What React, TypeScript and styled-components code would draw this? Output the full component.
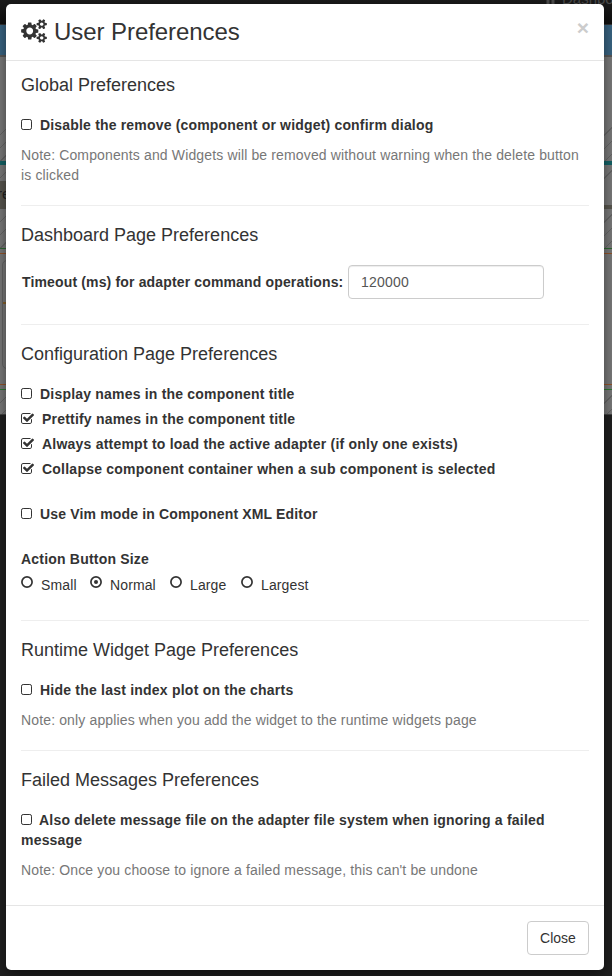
import React from "react";
import styled, { createGlobalStyle } from "styled-components";

const GlobalStyle = createGlobalStyle`
  * { box-sizing: border-box; }
  html, body { margin: 0; height: 100%; background: #1c1c1c; overflow: hidden; }
  body { font: 14px/20px "Liberation Sans", Arial, sans-serif; color: #333; }
`;

const Screen = styled.div`
  position: relative;
  width: 612px;
  height: 976px;
  overflow: hidden;
`;

/* dimmed dashboard page behind the dialog */
const Page = styled.div`
  height: 100%;
  display: flex;
  flex-direction: column;
  background: #202020;
`;
const Nav = styled.div`
  height: 25px;
  flex: none;
  display: flex;
  align-items: flex-start;
  gap: 6px;
  padding-left: 545px;
  background: linear-gradient(#1b1b1b, #101010);
  border-bottom: 1px solid #333;
  color: #4c4c4c;
  white-space: nowrap;
  overflow: hidden;
`;
const NavIcon = styled.svg`
  width: 11px;
  height: 11px;
  flex: none;
  margin-top: -7px;
`;
const NavText = styled.span`
  margin-top: -11px;
  font-size: 15px;
`;
const Band = styled.div<{ $h: number; $color: string }>`
  flex: none;
  height: ${(p) => p.$h}px;
  background: ${(p) => p.$color};
`;
const Hatch = styled.div<{ $h: number }>`
  flex: none;
  height: ${(p) => p.$h}px;
  background: repeating-linear-gradient(135deg, #7c7c7c 0 8.5px, #686868 8.5px 9.5px);
`;
const Tab = styled.div`
  flex: none;
  height: 28px;
  display: flex;
  justify-content: space-between;
  align-items: flex-end;
`;
const TabLabel = styled.div`
  width: 40px;
  height: 28px;
  background: #5a5850;
  color: #222;
  font-size: 15px;
  line-height: 25px;
  text-indent: -3px;
`;
const TabRule = styled.div`
  flex: 1;
  height: 28px;
  background: linear-gradient(#7c7c7c 0 24px, #5a5850 24px);
`;
const Panel = styled.div`
  flex: none;
  height: 130px;
  padding: 6px 2px 15px;
  background: #7c7c7c;
`;
const PanelCard = styled.div`
  width: 560px;
  height: 109px;
  border: 1px solid #666;
  border-radius: 5px;
  padding-top: 41px;
`;
const PanelRule = styled.div`
  height: 2px;
  background: #8a632c;
`;

const Dialog = styled.div`
  position: absolute;
  left: 6px;
  top: 4px;
  width: 598px;
  height: 966px;
  display: flex;
  flex-direction: column;
  background: #fff;
  border-radius: 5px;
  box-shadow: 0 5px 15px rgba(0, 0, 0, 0.5);
`;
const Header = styled.header`
  flex: none;
  height: 57px;
  padding: 0 15px;
  display: flex;
  align-items: flex-start;
  border-bottom: 1px solid #e5e5e5;
`;
const Title = styled.h3`
  margin: 11px 0 0 7px;
  flex: 1;
  font-size: 24px;
  line-height: 34px;
  font-weight: 400;
  letter-spacing: -0.06px;
`;
const CogsIcon = styled.svg`
  width: 26px;
  height: 24px;
  margin-top: 15px;
`;
const Dismiss = styled.button`
  margin: 13px 0 0;
  padding: 0;
  border: 0;
  background: none;
  color: #ccc;
  font: bold 21px/21px "Liberation Sans", Arial, sans-serif;
`;
const Body = styled.main`
  flex: 1;
  padding: 14px 15px 0;
`;
const Section = styled.section<{ $h: number }>`
  height: ${(p) => p.$h}px;
  & + & {
    border-top: 1px solid #eee;
    padding-top: 19px;
  }
`;
const Heading = styled.h4`
  margin: 0 0 20px;
  font-size: 18px;
  line-height: 20px;
  font-weight: 400;
`;
const CheckLabel = styled.label<{ $gap?: number; $track?: number }>`
  display: block;
  margin-bottom: ${(p) => p.$gap ?? 5}px;
  font-weight: 700;
  letter-spacing: ${(p) => p.$track ?? 0.2}px;
`;
const CheckIcon = styled.svg<{ $checked?: boolean; $space?: number }>`
  width: ${(p) => (p.$checked ? 13 : 11)}px;
  height: 14px;
  margin-right: ${(p) => p.$space ?? 8}px;
  vertical-align: -2px;
`;
const Note = styled.p`
  margin: 10px 0 0;
  color: #777;
  letter-spacing: 0.14px;
`;
const Field = styled.div`
  display: flex;
  align-items: center;
  padding-left: 1px;
`;
const FieldLabel = styled.label`
  width: 326px;
  font-weight: 700;
  letter-spacing: 0.15px;
  white-space: nowrap;
`;
const Input = styled.input`
  width: 196px;
  height: 34px;
  padding: 6px 12px;
  border: 1px solid #ccc;
  border-radius: 4px;
  box-shadow: inset 0 1px 1px rgba(0, 0, 0, 0.075);
  color: #555;
  font: 14px/20px "Liberation Sans", Arial, sans-serif;
  letter-spacing: 0.2px;
`;
const GroupLabel = styled.div`
  font-weight: 700;
  letter-spacing: 0.2px;
`;
const Radios = styled.div`
  display: flex;
  margin-top: 6px;
  letter-spacing: 0.12px;
`;
const Radio = styled.label<{ $w: number }>`
  display: flex;
  width: ${(p) => p.$w}px;
  gap: 8px;
`;
const RadioIcon = styled.svg`
  width: 12px;
  height: 12px;
  margin-top: 1px;
`;
const Footer = styled.footer`
  flex: none;
  height: 65px;
  padding: 15px;
  border-top: 1px solid #e5e5e5;
  display: flex;
  justify-content: flex-end;
`;
const CloseButton = styled.button`
  width: 62px;
  height: 34px;
  padding: 0;
  border: 1px solid #ccc;
  border-radius: 4px;
  background: #fff;
  color: #333;
  font: 14px/20px "Liberation Sans", Arial, sans-serif;
`;

const smallCog =
  "v140q0 16-149 31-12 27-30 52 51 113 51 138 0 4-4 7-122 71-124 71-8 0-46-47t-52-68q-20 2-30 2t-30-2q-14 21-52 68t-46 47q-2 0-124-71-4-3-4-7 0-25 51-138-18-25-30-52-149-15-149-31v-140q0-16 149-31 13-29 30-52-51-113-51-138 0-4 4-7 4-2 35-20t59-34 30-16q8 0 46 46.5t52 67.5q20-2 30-2t30 2q51-71 92-112l6-2q4 0 124 70 4 3 4 7 0 25-51 138 17 23 30 52 149 15 149 31z";
const cogsPath =
  "M896 896q0-106-75-181t-181-75-181 75-75 181 75 181 181 75 181-75 75-181zm768 512q0-52-38-90t-90-38-90 38-38 90q0 53 37.5 90.5t90.5 37.5 90.5-37.5 37.5-90.5zm0-1024q0-52-38-90t-90-38-90 38-38 90q0 53 37.5 90.5t90.5 37.5 90.5-37.5 37.5-90.5zm-384 421v185q0 10-7 19.5t-16 10.5l-155 24q-11 35-32 76 34 48 90 115 7 11 7 20 0 12-7 19-23 30-82.5 89.5t-78.5 59.5q-11 0-21-7l-115-90q-37 19-77 31-11 108-23 155-7 24-30 24h-186q-11 0-20-7.5t-10-17.5l-23-153q-34-10-75-31l-118 89q-7 7-20 7-11 0-21-8-144-133-144-160 0-9 7-19 10-14 41-53t47-61q-23-44-35-82l-152-24q-10-1-17-9.5t-7-19.5v-185q0-10 7-19.5t16-10.5l155-24q11-35 32-76-34-48-90-115-7-11-7-20 0-12 7-20 22-30 82-89t79-59q11 0 21 7l115 90q34-18 77-32 11-108 23-154 7-24 30-24h186q11 0 20 7.5t10 17.5l23 153q34 10 75 31l118-89q8-7 20-7 11 0 21 8 144 133 144 160 0 8-7 19-12 16-42 54t-45 60q23 48 34 82l152 23q10 2 17 10.5t7 19.5zm640 533" +
  smallCog +
  "m0-1024" +
  smallCog;
const checkedPath =
  "M1472 930v318q0 119-84.5 203.5t-203.5 84.5h-832q-119 0-203.5-84.5t-84.5-203.5v-832q0-119 84.5-203.5t203.5-84.5h832q63 0 117 25 15 7 18 23 3 17-9 29l-49 49q-10 10-23 10-3 0-9-2-23-6-45-6h-832q-66 0-113 47t-47 113v832q0 66 47 113t113 47h832q66 0 113-47t47-113v-254q0-13 9-22l64-64q10-10 23-10 6 0 12 3 20 8 20 29zm231-489l-814 814q-24 24-57 24t-57-24l-430-430q-24-24-24-57t24-57l110-110q24-24 57-24t57 24l263 263 647-647q24-24 57-24t57 24l110 110q24 24 24 57t-24 57z";

type CheckProps = {
  checked?: boolean;
  gap?: number;
  space?: number;
  track?: number;
  children: React.ReactNode;
};

function Check({ checked, gap, space, track, children }: CheckProps) {
  return (
    <CheckLabel $gap={gap} $track={track}>
      {checked ? (
        <CheckIcon $checked $space={space} viewBox="64 0 1664 1792" fill="#333">
          <path d={checkedPath} />
        </CheckIcon>
      ) : (
        <CheckIcon $space={space} viewBox="0 0 11 14" fill="none" stroke="#333">
          <rect x="0.5" y="1.5" width="10" height="10" rx="1.7" />
        </CheckIcon>
      )}
      {children}
    </CheckLabel>
  );
}

const sizes = [
  { name: "Small", w: 69 },
  { name: "Normal", w: 80 },
  { name: "Large", w: 71 },
  { name: "Largest", w: 80 },
];

export default function App() {
  return (
    <Screen>
      <GlobalStyle />
      <Page>
        <Nav>
          <NavIcon viewBox="0 0 11 11" fill="#4c4c4c">
            <path d="M5.5 0 0 5h1.5v6h3V7h2v4h3V5H11z" />
          </NavIcon>
          <NavText>Dashboard</NavText>
        </Nav>
        <Band $h={30} $color="#3a6685" />
        <Band $h={2} $color="#5a5a5a" />
        <Band $h={65} $color="#7c7c7c" />
        <Hatch $h={39} />
        <Band $h={4} $color="#146468" />
        <Hatch $h={16} />
        <Tab>
          <TabLabel>re</TabLabel>
          <TabRule />
        </Tab>
        <Hatch $h={39} />
        <Band $h={1} $color="#2f6b34" />
        <Band $h={4} $color="#7c7c7c" />
        <Band $h={1} $color="#96552b" />
        <Panel>
          <PanelCard>
            <PanelRule />
          </PanelCard>
        </Panel>
        <Band $h={1} $color="#96552b" />
        <Band $h={4} $color="#7c7c7c" />
        <Band $h={1} $color="#2f7b34" />
        <Hatch $h={24} />
        <Band $h={1} $color="#444" />
      </Page>
      <Dialog role="dialog">
        <Header>
          <CogsIcon viewBox="0 0 1920 1792" fill="#333">
            <path d={cogsPath} />
          </CogsIcon>
          <Title>User Preferences</Title>
          <Dismiss aria-label="Close">×</Dismiss>
        </Header>
        <Body>
          <Section $h={130}>
            <Heading>Global Preferences</Heading>
            <Check track={0.18}>Disable the remove (component or widget) confirm dialog</Check>
            <Note>
              Note: Components and Widgets will be removed without warning when the delete button
              is clicked
            </Note>
          </Section>
          <Section $h={119}>
            <Heading>Dashboard Page Preferences</Heading>
            <Field>
              <FieldLabel htmlFor="timeout">Timeout (ms) for adapter command operations:</FieldLabel>
              <Input id="timeout" defaultValue="120000" />
            </Field>
          </Section>
          <Section $h={296}>
            <Heading>Configuration Page Preferences</Heading>
            <Check>Display names in the component title</Check>
            <Check checked>Prettify names in the component title</Check>
            <Check checked track={0.22}>
              Always attempt to load the active adapter (if only one exists)
            </Check>
            <Check checked gap={25} track={0.23}>
              Collapse component container when a sub component is selected
            </Check>
            <Check gap={25} track={0.16}>
              Use Vim mode in Component XML Editor
            </Check>
            <GroupLabel>Action Button Size</GroupLabel>
            <Radios>
              {sizes.map((s) => (
                <Radio key={s.name} $w={s.w}>
                  <RadioIcon viewBox="0 0 12 12">
                    <circle cx="6" cy="6" r="5.1" fill="none" stroke="#333" strokeWidth="1.7" />
                    {s.name === "Normal" && <circle cx="6" cy="6" r="2" fill="#333" />}
                  </RadioIcon>
                  {s.name}
                </Radio>
              ))}
            </Radios>
          </Section>
          <Section $h={130}>
            <Heading>Runtime Widget Page Preferences</Heading>
            <Check track={0.22}>Hide the last index plot on the charts</Check>
            <Note>Note: only applies when you add the widget to the runtime widgets page</Note>
          </Section>
          <Section $h={155}>
            <Heading>Failed Messages Preferences</Heading>
            <Check space={7}>
              Also delete message file on the adapter file system when ignoring a failed message
            </Check>
            <Note>Note: Once you choose to ignore a failed message, this can't be undone</Note>
          </Section>
        </Body>
        <Footer>
          <CloseButton>Close</CloseButton>
        </Footer>
      </Dialog>
    </Screen>
  );
}
